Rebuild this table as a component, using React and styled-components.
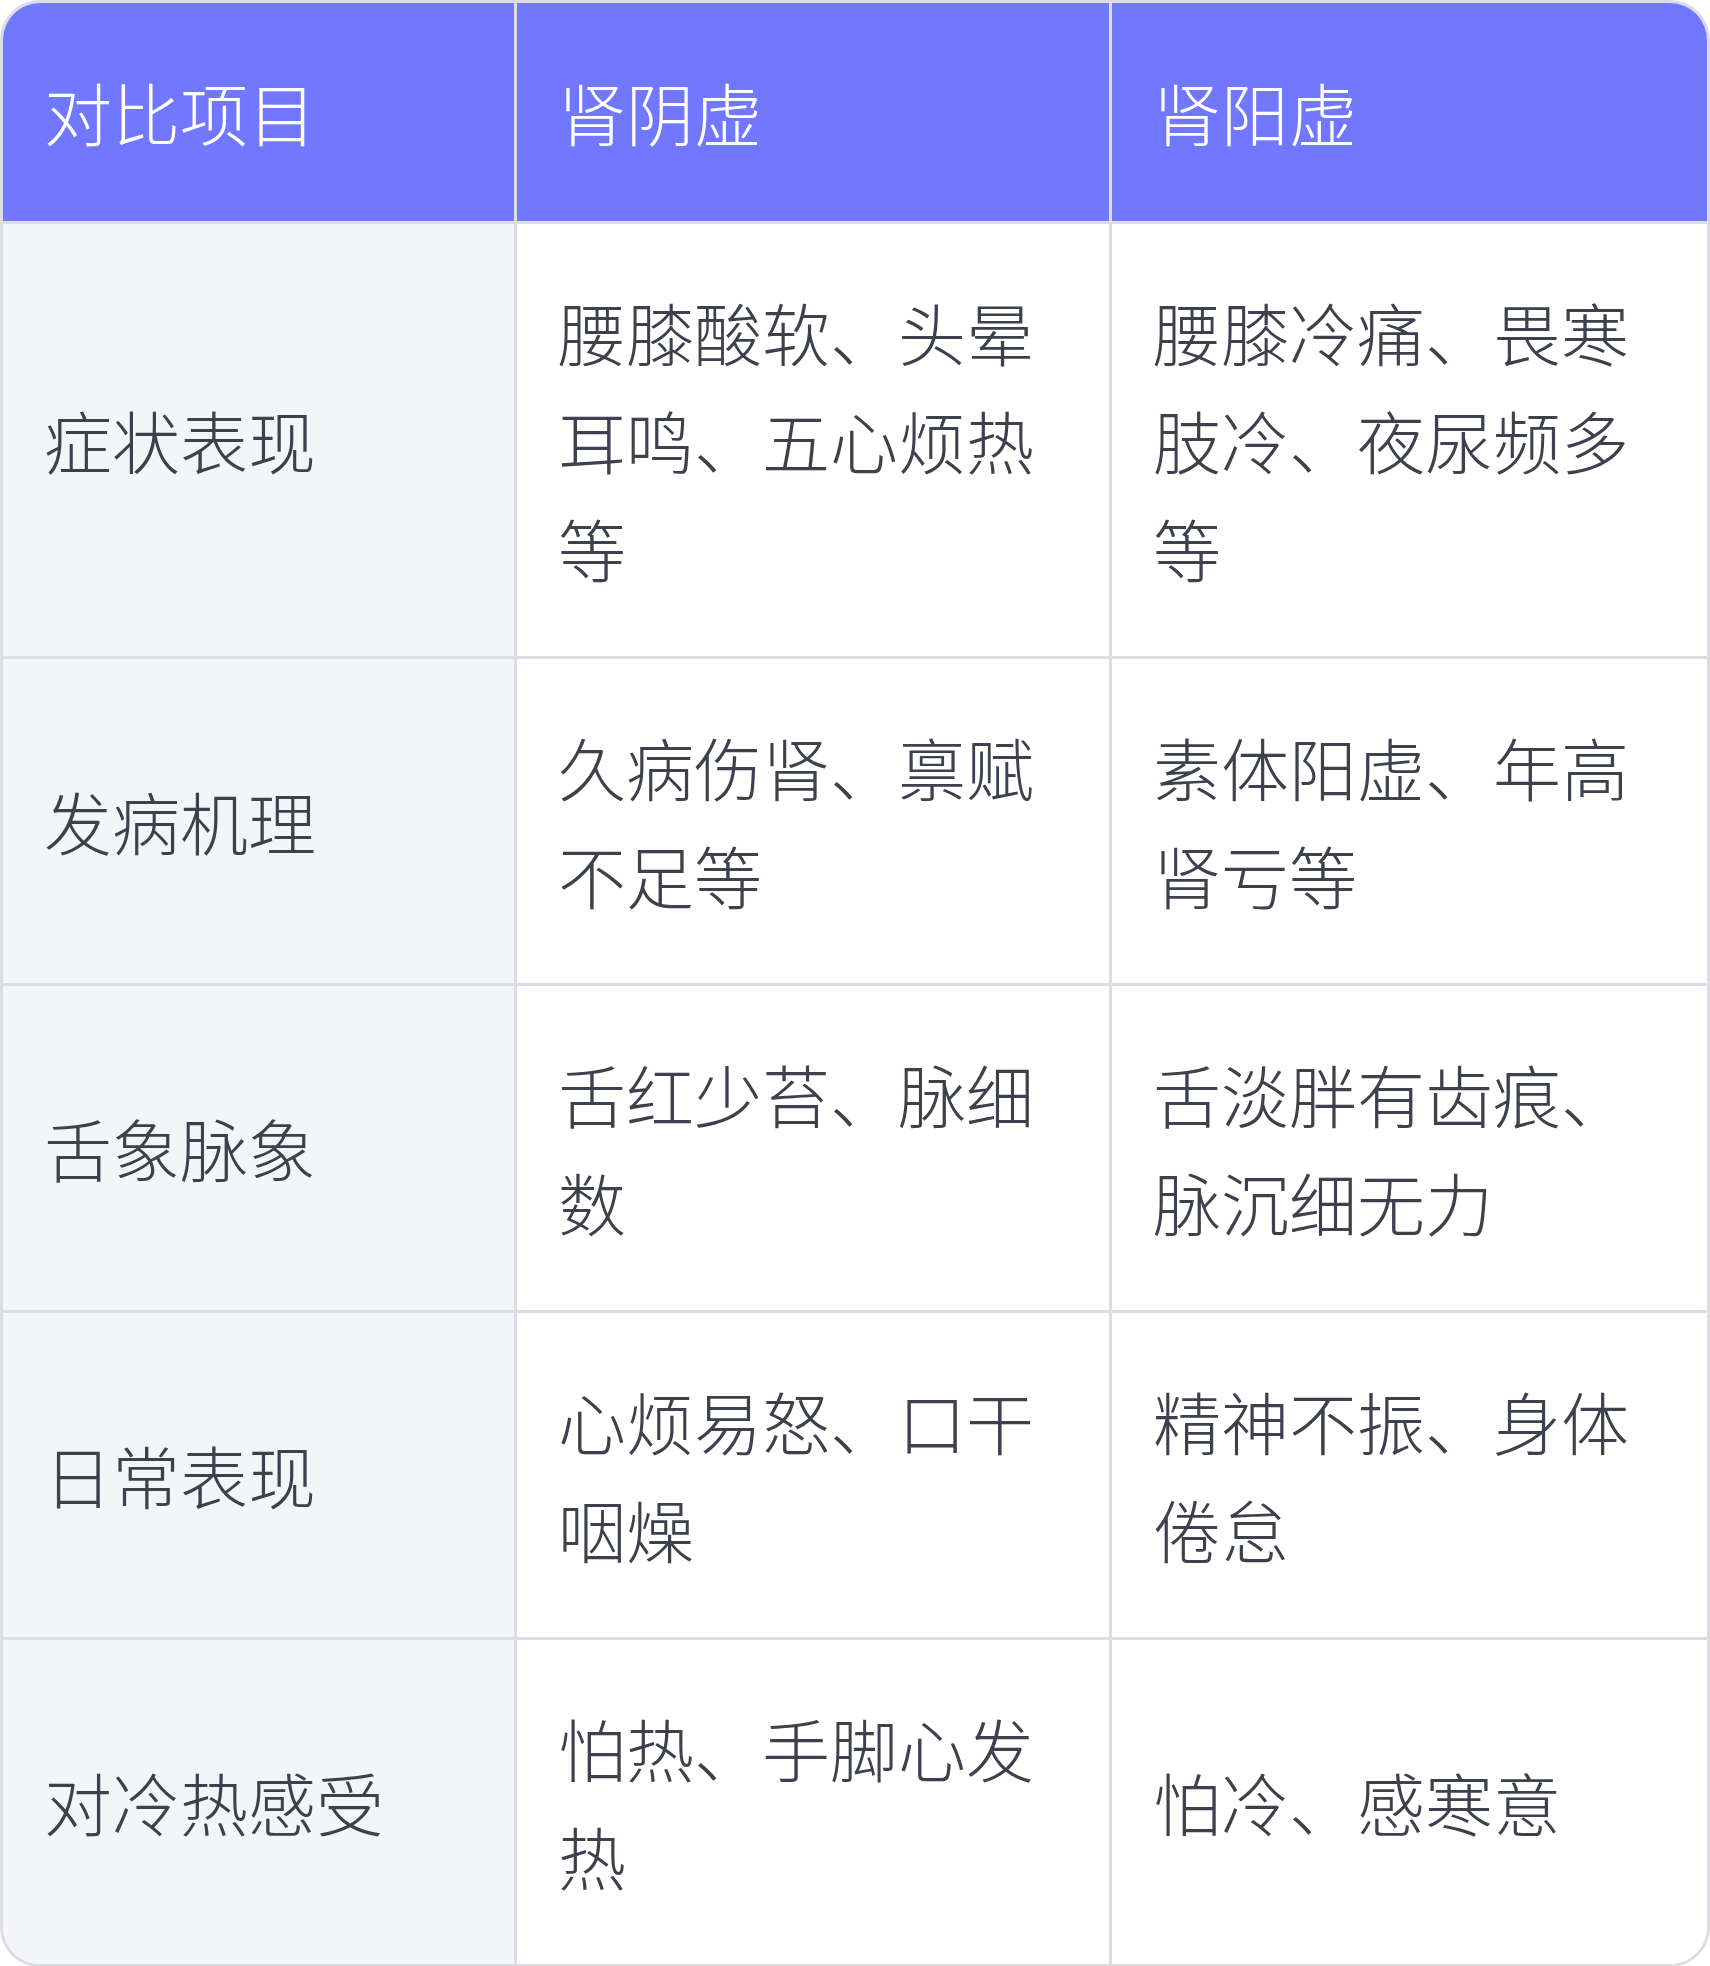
import React from 'react';
import styled, { createGlobalStyle } from 'styled-components';

const GlobalStyle = createGlobalStyle`
  html, body {
    margin: 0;
    padding: 0;
    background: #ffffff;
  }
  body {
    font-family: "Noto Sans CJK SC", "Noto Sans", sans-serif;
  }
`;

const TableFrame = styled.div`
  width: 1710px;
  box-sizing: border-box;
  border: 3px solid #dcdde3;
  border-radius: 40px;
  overflow: hidden;
  display: grid;
  grid-template-columns: 514px 595px 1fr;
`;

const Cell = styled.div`
  box-sizing: border-box;
  display: flex;
  align-items: center;
  padding: 54px 41px;
  font-size: 68px;
  line-height: 108px;
  font-weight: 300;
  border-right: ${(p) => (p.$last ? 'none' : '3px solid #dcdde3')};
  border-bottom: ${(p) => (p.$bottom ? 'none' : '3px solid #dcdde3')};
  background: ${(p) => (p.$label ? '#f4f5f9' : '#ffffff')};
  color: #3d404d;
`;

const HeadCell = styled(Cell)`
  padding-top: 55px;
  padding-bottom: 55px;
  background: #7177ff;
  color: #ffffff;
`;

const rows = [
  ['症状表现', '腰膝酸软、头晕耳鸣、五心烦热等', '腰膝冷痛、畏寒肢冷、夜尿频多等'],
  ['发病机理', '久病伤肾、禀赋不足等', '素体阳虚、年高肾亏等'],
  ['舌象脉象', '舌红少苔、脉细数', '舌淡胖有齿痕、脉沉细无力'],
  ['日常表现', '心烦易怒、口干咽燥', '精神不振、身体倦怠'],
  ['对冷热感受', '怕热、手脚心发热', '怕冷、感寒意'],
];

export default function App() {
  return (
    <>
      <GlobalStyle />
      <TableFrame>
        <HeadCell>对比项目</HeadCell>
        <HeadCell>肾阴虚</HeadCell>
        <HeadCell $last>肾阳虚</HeadCell>
        {rows.map((row, i) => {
          const bottom = i === rows.length - 1;
          return (
            <React.Fragment key={row[0]}>
              <Cell $label $bottom={bottom}>{row[0]}</Cell>
              <Cell $bottom={bottom}>{row[1]}</Cell>
              <Cell $last $bottom={bottom}>{row[2]}</Cell>
            </React.Fragment>
          );
        })}
      </TableFrame>
    </>
  );
}
